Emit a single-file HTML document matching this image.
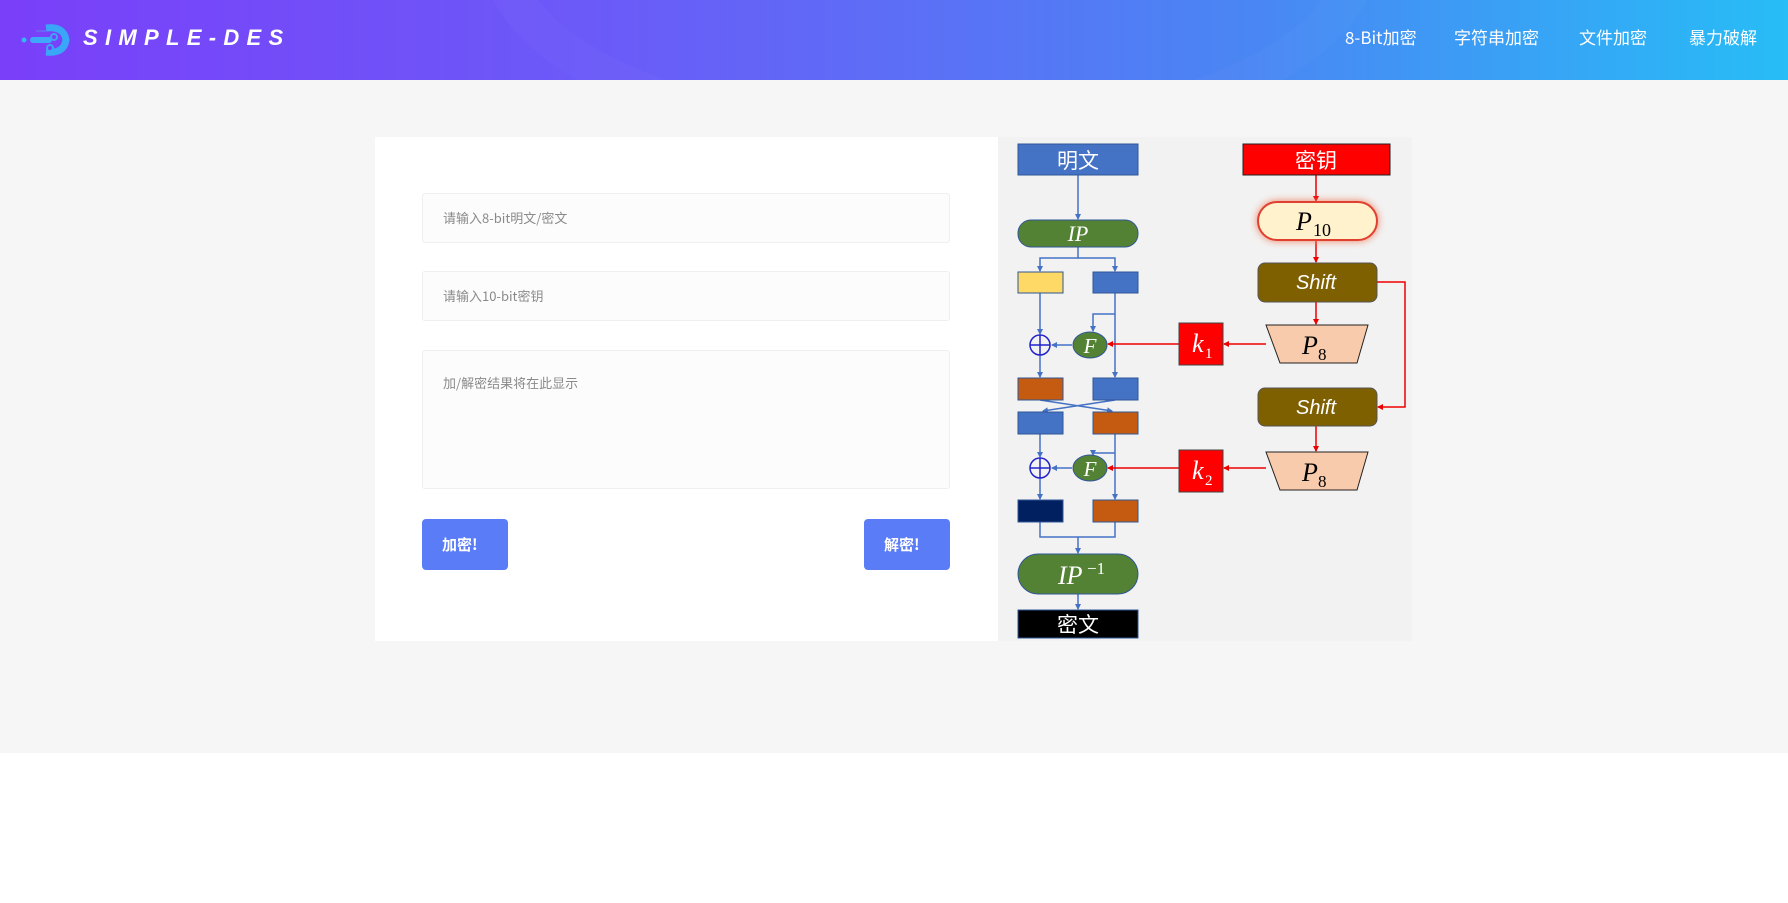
<!DOCTYPE html>
<html><head><meta charset="utf-8"><style>
*{margin:0;padding:0;box-sizing:border-box}
body{width:1788px;height:903px;background:#fff;font-family:"Liberation Sans","Noto Sans CJK SC",sans-serif;position:relative;overflow:hidden}
.hdr{position:absolute;left:0;top:0;width:1788px;height:80px;background:linear-gradient(90deg,#7a3ff9 0%,#6a5cf8 35%,#4a86f4 70%,#27bdf6 100%);overflow:hidden}
.hdr .arc{position:absolute;left:480px;top:-260px;width:900px;height:420px;border-radius:50%;border:40px solid rgba(255,255,255,0.025)}
.logo{position:absolute;left:83px;top:25px;color:#fff;font-size:22px;font-weight:bold;font-style:italic;letter-spacing:7.3px}
.nav{position:absolute;top:24px;color:#fff;font-size:17px;font-family:"Noto Sans CJK SC","Liberation Sans",sans-serif}
.gray{position:absolute;left:0;top:80px;width:1788px;height:673px;background:#f6f6f6}
.card{position:absolute;left:375px;top:137px;width:623px;height:504px;background:#fff}
.inp{position:absolute;left:47px;width:528px;background:#fcfcfc;border:1px solid #efefef;border-radius:3px;color:#8a8a8a;font-size:13px;padding-left:20px;font-family:"Noto Sans CJK SC",sans-serif}
.btn{position:absolute;top:382px;width:86px;height:51px;background:#5a7cf6;border-radius:4px;color:#fff;font-weight:bold;font-size:15px;line-height:51px;padding-left:20px;font-family:"Noto Sans CJK SC",sans-serif}
</style></head><body>
<div class="hdr"><div class="arc"></div>
<svg style="position:absolute;left:18px;top:22px" width="52" height="36" viewBox="0 0 52 36">
<circle cx="6" cy="18" r="2.5" fill="#35b6f7"/>
<rect x="12" y="15" width="22" height="6" rx="3" fill="#3fa8f8"/>
<path d="M28 6 Q46 4 48 18 Q46 32 28 30" stroke="#3aa6f8" stroke-width="7" fill="none"/>
<circle cx="36" cy="15" r="3" fill="#7a3ff9" stroke="#3aa6f8" stroke-width="2"/>
<circle cx="32" cy="26" r="3" fill="#7a3ff9" stroke="#3aa6f8" stroke-width="2"/>
<rect x="18" y="8" width="10" height="2" fill="#6b62f8"/>
</svg>
<div class="logo">SIMPLE-DES</div>
<div class="nav" style="left:1345px">8-Bit加密</div>
<div class="nav" style="left:1454px">字符串加密</div>
<div class="nav" style="left:1579px">文件加密</div>
<div class="nav" style="left:1689px">暴力破解</div>
</div>
<div class="gray"></div>
<div class="card">
<div class="inp" style="top:56px;height:50px;line-height:48px">请输入8-bit明文/密文</div>
<div class="inp" style="top:134px;height:50px;line-height:48px">请输入10-bit密钥</div>
<div class="inp" style="top:213px;height:139px;padding-top:22px">加/解密结果将在此显示</div>
<div class="btn" style="left:47px">加密!</div>
<div class="btn" style="left:489px">解密!</div>
</div>
<svg style="position:absolute;left:998px;top:137px" width="414" height="504" viewBox="998 137 414 504" font-family="Liberation Serif,serif">
<defs>
<marker id="ab" markerWidth="6" markerHeight="6" refX="5" refY="3" orient="auto" markerUnits="userSpaceOnUse"><path d="M0 0L6 3L0 6z" fill="#4472c4"/></marker>
<marker id="ar" markerWidth="6" markerHeight="6" refX="5" refY="3" orient="auto" markerUnits="userSpaceOnUse"><path d="M0 0L6 3L0 6z" fill="#e00"/></marker>
</defs>
<rect x="998" y="137" width="414" height="504" fill="#f2f2f2"/>
<g stroke="#4472c4" stroke-width="1.5" fill="none" marker-end="url(#ab)">
<path d="M1078 175V219"/>
<path d="M1078 247V258H1040V271"/>
<path d="M1078 258H1115V271"/>
<path d="M1040 293V334"/>
<path d="M1115 293V377"/>
<path d="M1115 314H1093V331"/>
<path d="M1040 355V377"/>
<path d="M1040 400L1112 411"/>
<path d="M1115 400L1043 411"/>
<path d="M1040 434V457"/>
<path d="M1115 434V499"/>
<path d="M1115 453H1093V455"/>
<path d="M1040 478V499"/>
<path d="M1040 522V537H1115V522M1078 537V553"/>
<path d="M1078 594V609"/>
<path d="M1072 345H1052"/>
<path d="M1072 468H1052"/>
</g>
<g stroke="#e00" stroke-width="1.5" fill="none" marker-end="url(#ar)">
<path d="M1316 175V201"/>
<path d="M1316 240V262"/>
<path d="M1316 302V324"/>
<path d="M1377 282H1405V407H1378"/>
<path d="M1316 426V451"/>
<path d="M1266 344H1224"/>
<path d="M1179 344H1108"/>
<path d="M1266 468H1224"/>
<path d="M1179 468H1108"/>
</g>
<rect x="1018" y="144" width="120" height="31" fill="#4472c4" stroke="#2f5597"/>
<text x="1078" y="168" fill="#fff" font-size="21" text-anchor="middle" font-family="Noto Sans CJK SC">明文</text>
<rect x="1243" y="144" width="147" height="31" fill="#f00" stroke="#222"/>
<text x="1316" y="168" fill="#fff" font-size="21" text-anchor="middle" font-family="Noto Sans CJK SC">密钥</text>
<rect x="1018" y="220" width="120" height="27" rx="13" fill="#548235" stroke="#2f5597"/>
<text x="1078" y="241" fill="#fff" font-size="22" font-style="italic" text-anchor="middle">IP</text>
<rect x="1258" y="202" width="119" height="38" rx="19" fill="#fff2cc" stroke="#e04030" stroke-width="2" style="filter:drop-shadow(0 0 4px #f08060)"/>
<text x="1296" y="230" font-size="26" font-style="italic">P</text><text x="1313" y="236" font-size="18">10</text>
<rect x="1258" y="263" width="119" height="39" rx="7" fill="#7f6000" stroke="#555"/>
<text x="1316" y="289" fill="#fff" font-size="20" font-style="italic" text-anchor="middle" font-family="Liberation Sans">Shift</text>
<rect x="1258" y="388" width="119" height="38" rx="7" fill="#7f6000" stroke="#555"/>
<text x="1316" y="414" fill="#fff" font-size="20" font-style="italic" text-anchor="middle" font-family="Liberation Sans">Shift</text>
<path d="M1266 325H1368L1357 363H1280Z" fill="#f8cbad" stroke="#222"/>
<text x="1302" y="354" font-size="26" font-style="italic">P</text><text x="1318" y="360" font-size="17">8</text>
<path d="M1266 452H1368L1357 490H1280Z" fill="#f8cbad" stroke="#222"/>
<text x="1302" y="481" font-size="26" font-style="italic">P</text><text x="1318" y="487" font-size="17">8</text>
<rect x="1179" y="323" width="44" height="42" fill="#f00" stroke="#444"/>
<text x="1192" y="352" fill="#fff" font-size="26" font-style="italic">k</text><text x="1205" y="358" fill="#fff" font-size="15">1</text>
<rect x="1179" y="450" width="44" height="42" fill="#f00" stroke="#444"/>
<text x="1192" y="479" fill="#fff" font-size="26" font-style="italic">k</text><text x="1205" y="485" fill="#fff" font-size="15">2</text>
<rect x="1018" y="272" width="45" height="21" fill="#ffd966" stroke="#2f5597"/>
<rect x="1093" y="272" width="45" height="21" fill="#4472c4" stroke="#2f5597"/>
<rect x="1018" y="378" width="45" height="22" fill="#c55a11" stroke="#2f5597"/>
<rect x="1093" y="378" width="45" height="22" fill="#4472c4" stroke="#2f5597"/>
<rect x="1018" y="412" width="45" height="22" fill="#4472c4" stroke="#2f5597"/>
<rect x="1093" y="412" width="45" height="22" fill="#c55a11" stroke="#2f5597"/>
<rect x="1018" y="500" width="45" height="22" fill="#002060" stroke="#2f5597"/>
<rect x="1093" y="500" width="45" height="22" fill="#c55a11" stroke="#2f5597"/>
<g stroke="#2222cc" stroke-width="1.5" fill="none">
<circle cx="1040" cy="345" r="10"/><path d="M1030 345H1050M1040 335V355"/>
<circle cx="1040" cy="468" r="10"/><path d="M1030 468H1050M1040 458V478"/>
</g>
<ellipse cx="1090" cy="345" rx="17" ry="13" fill="#548235" stroke="#2f5597"/>
<text x="1090" y="353" fill="#fff" font-size="21" font-style="italic" text-anchor="middle">F</text>
<ellipse cx="1090" cy="468" rx="17" ry="13" fill="#548235" stroke="#2f5597"/>
<text x="1090" y="476" fill="#fff" font-size="21" font-style="italic" text-anchor="middle">F</text>
<rect x="1018" y="554" width="120" height="40" rx="20" fill="#548235" stroke="#2f5597"/>
<text x="1058" y="584" fill="#fff" font-size="26" font-style="italic">IP</text><text x="1087" y="574" fill="#fff" font-size="17">−1</text>
<rect x="1018" y="610" width="120" height="28" fill="#000" stroke="#2f5597"/>
<text x="1078" y="632" fill="#fff" font-size="21" text-anchor="middle" font-family="Noto Sans CJK SC">密文</text>
</svg>
</body></html>
